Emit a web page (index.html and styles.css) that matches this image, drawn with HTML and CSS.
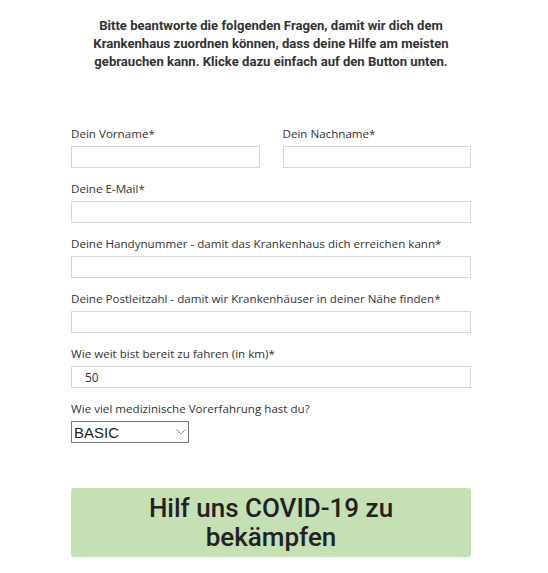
FILE: index.html
```html
<!DOCTYPE html>
<html lang="de">
<head>
<meta charset="utf-8">
<title>Formular</title>
<link rel="stylesheet" href="styles.css">
</head>
<body>
<div class="page">
  <h1 class="intro">Bitte beantworte die folgenden Fragen, damit wir dich dem Krankenhaus zuordnen können, dass deine Hilfe am meisten gebrauchen kann. Klicke dazu einfach auf den Button unten.</h1>
  <form class="form">
    <div class="row">
      <div class="field">
        <label class="label">Dein Vorname*</label>
        <input class="input" type="text">
      </div>
      <div class="field">
        <label class="label">Dein Nachname*</label>
        <input class="input" type="text">
      </div>
    </div>
    <div class="field">
      <label class="label">Deine E-Mail*</label>
      <input class="input" type="text">
    </div>
    <div class="field">
      <label class="label">Deine Handynummer - damit das Krankenhaus dich erreichen kann*</label>
      <input class="input" type="text">
    </div>
    <div class="field">
      <label class="label">Deine Postleitzahl - damit wir Krankenhäuser in deiner Nähe finden*</label>
      <input class="input" type="text">
    </div>
    <div class="field">
      <label class="label">Wie weit bist bereit zu fahren (in km)*</label>
      <input class="input" type="text" value="50">
    </div>
    <div class="field">
      <label class="label">Wie viel medizinische Vorerfahrung hast du?</label>
      <div class="select-wrap">
        <select class="select"><option>BASIC</option></select>
        <svg class="chev" width="10" height="6" viewBox="0 0 10 6"><path d="M0.5 0.5 L5 5 L9.5 0.5" fill="none" stroke="#8a8a8a" stroke-width="1"/></svg>
      </div>
    </div>
    <button class="submit" type="button">Hilf uns COVID-19 zu bekämpfen</button>
  </form>
</div>
</body>
</html>
```
FILE: styles.css
```css
html, body {
  margin: 0;
  padding: 0;
  background: #ffffff;
}
.page {
  width: 400px;
  margin-left: 71px;
  padding-top: 17px;
}
.intro {
  width: 380px;
  margin: 0 auto;
  font-family: Roboto, "Liberation Sans", sans-serif;
  font-weight: 700;
  font-size: 13.1px;
  line-height: 18px;
  color: #333333;
  text-align: center;
}
.form {
  margin-top: 54px;
  display: flex;
  flex-direction: column;
}
.row {
  display: flex;
  gap: 23px;
}
.row .field {
  flex: 1;
}
.field {
  display: flex;
  flex-direction: column;
  margin-bottom: 12px;
}
.label {
  font-family: "Open Sans", "Noto Sans", sans-serif;
  font-size: 11.6px;
  line-height: 17px;
  color: #333333;
  margin-bottom: 4px;
}
.input {
  box-sizing: border-box;
  height: 22px;
  width: 100%;
  margin: 0;
  border: 1px solid #d6d6d6;
  padding: 0 13px;
  font-family: "Open Sans", "Noto Sans", sans-serif;
  font-size: 12px;
  color: #333333;
  background: #ffffff;
  outline: none;
}
.select-wrap {
  position: relative;
  width: 118px;
  height: 22px;
}
.select {
  appearance: none;
  -webkit-appearance: none;
  box-sizing: border-box;
  width: 118px;
  height: 22px;
  margin: 0;
  border: 1px solid #767676;
  border-radius: 0;
  padding: 0 0 0 2px;
  background: #ffffff;
  font-family: "Liberation Sans", Arial, sans-serif;
  font-size: 15px;
  color: #222222;
}
.chev {
  position: absolute;
  right: 3px;
  top: 8px;
  pointer-events: none;
}
.submit {
  margin-top: 33px;
  box-sizing: border-box;
  width: 400px;
  height: 69px;
  border: none;
  border-radius: 3px;
  background: #c5e0b4;
  padding: 0 70px;
  font-family: Roboto, "Liberation Sans", sans-serif;
  font-weight: 500;
  font-size: 26px;
  line-height: 29px;
  color: #222222;
  text-align: center;
}
```
